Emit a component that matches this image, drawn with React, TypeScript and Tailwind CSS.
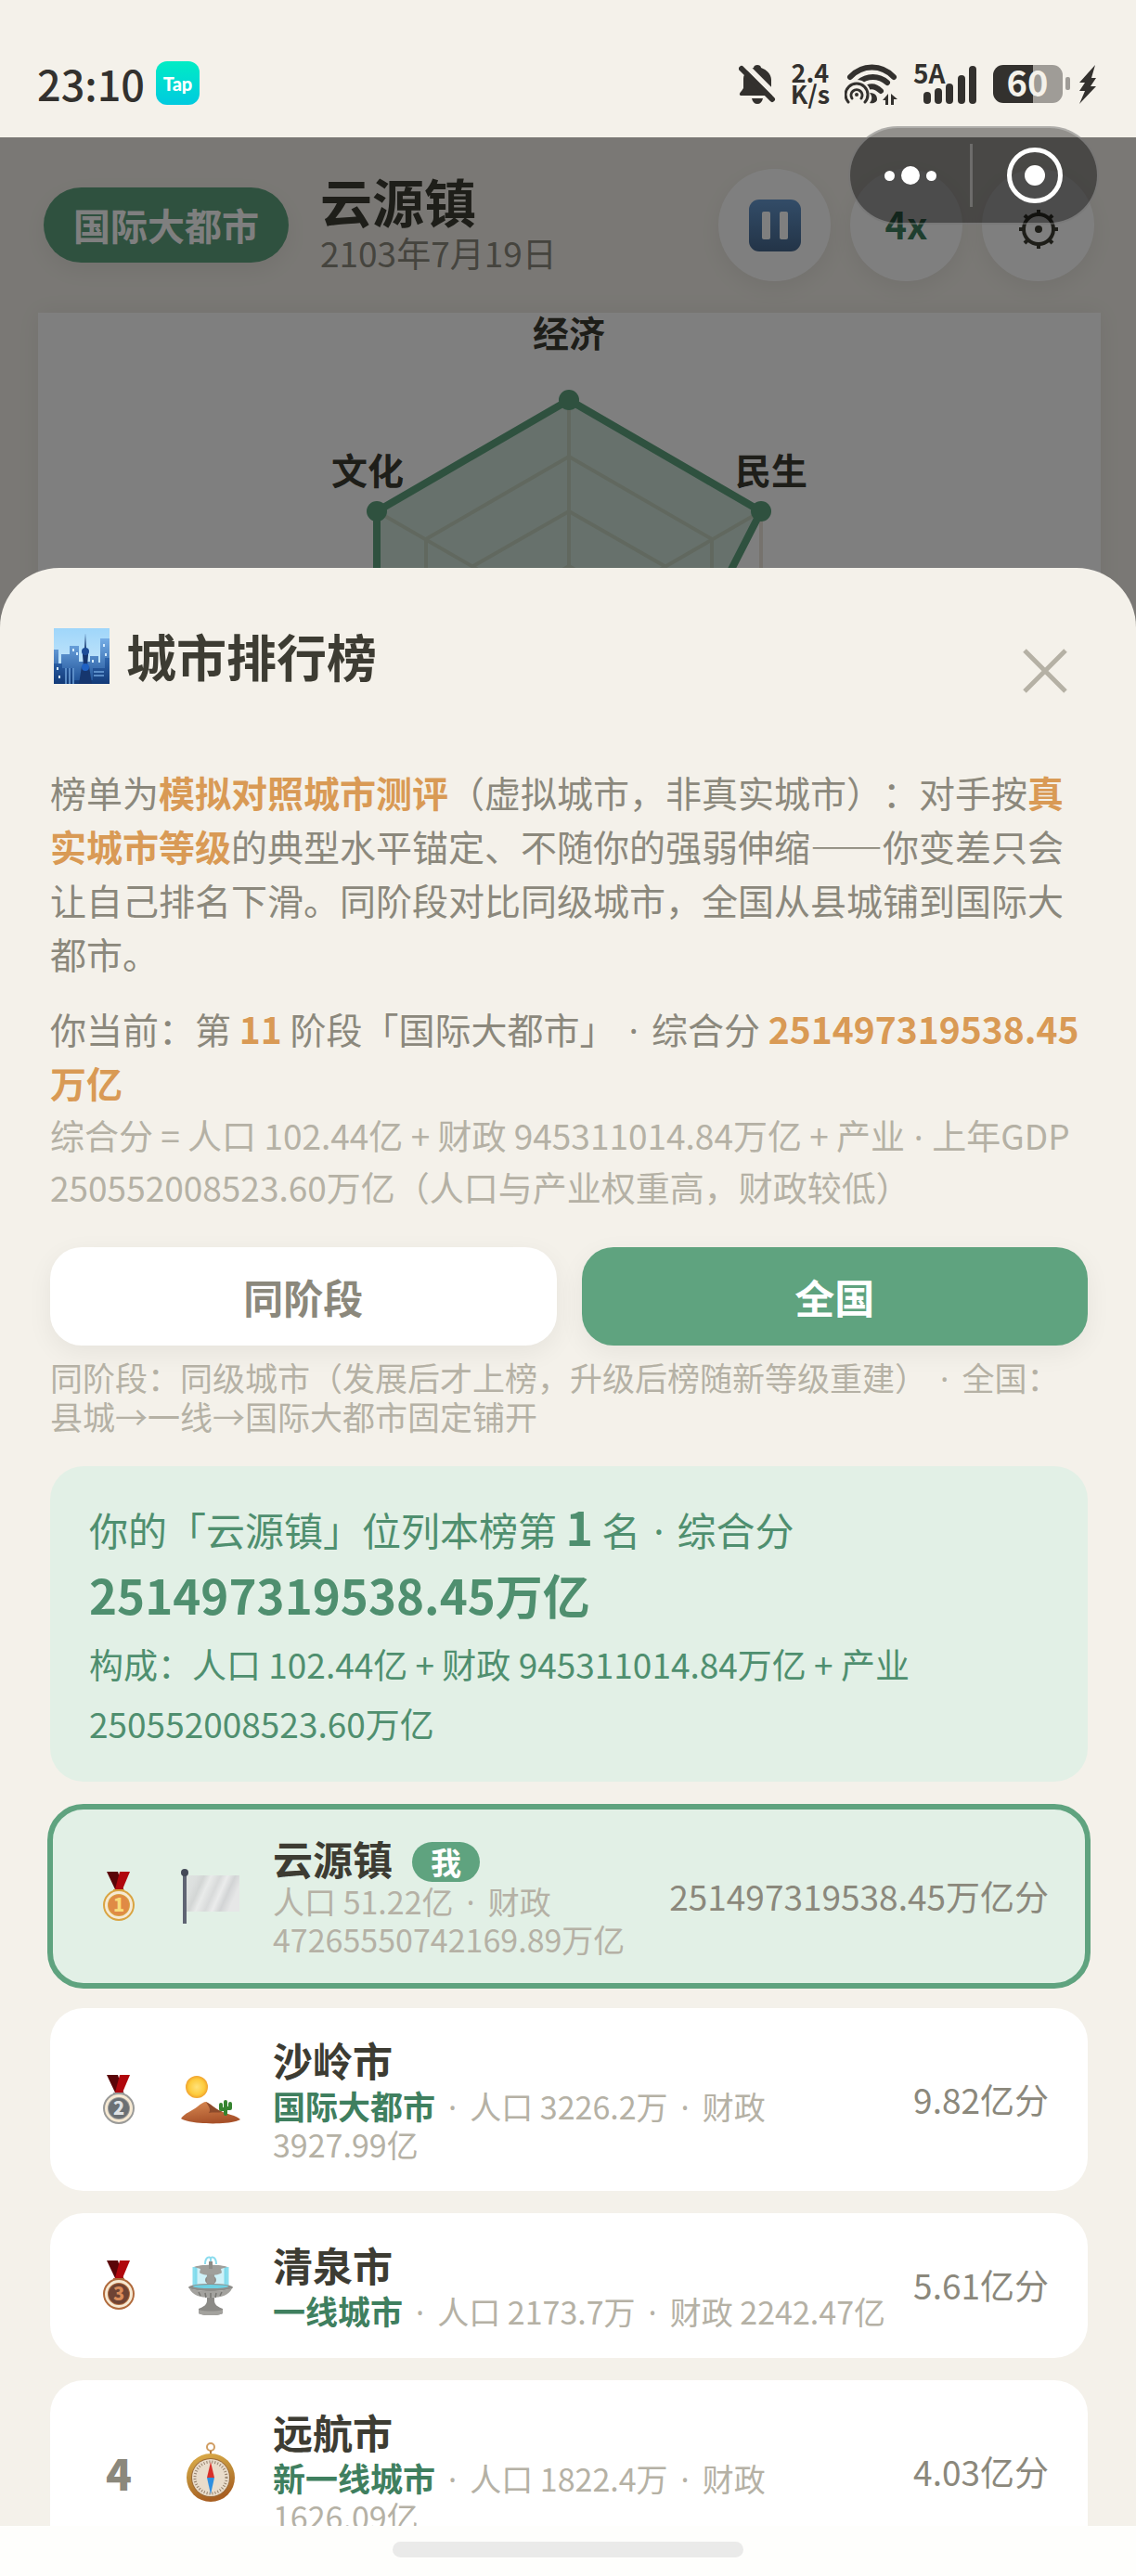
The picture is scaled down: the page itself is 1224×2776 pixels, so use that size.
import { useState } from 'react';

type City = {
  name: string;
  rank: number;
  level?: string;
  population: string;
  finance: string;
  score: string;
  icon: () => React.ReactNode;
  me?: boolean;
};

const cities: City[] = [
  { name: '云源镇', rank: 1, population: '51.22亿', finance: '47265550742169.89万亿', score: '251497319538.45万亿分', icon: FlagIcon, me: true },
  { name: '沙岭市', rank: 2, level: '国际大都市', population: '3226.2万', finance: '3927.99亿', score: '9.82亿分', icon: DesertIcon },
  { name: '清泉市', rank: 3, level: '一线城市', population: '2173.7万', finance: '2242.47亿', score: '5.61亿分', icon: FountainIcon },
  { name: '远航市', rank: 4, level: '新一线城市', population: '1822.4万', finance: '1626.09亿', score: '4.03亿分', icon: CompassIcon },
];

const medals: Record<number, { rim: string; inner: string; digit: string }> = {
  1: { rim: '#d9a441', inner: '#e08a45', digit: '#f9dc7a' },
  2: { rim: '#9a9a98', inner: '#6b7074', digit: '#dfe2e4' },
  3: { rim: '#b06a3c', inner: '#6e4334', digit: '#d98c5a' },
};

// narrow middle dot between facts
function Dot() {
  return <span className="mx-[14px] font-['Noto_Sans'] leading-none">·</span>;
}

function Medal({ rank }: { rank: number }) {
  const m = medals[rank];
  return (
    <svg width="36" height="54" viewBox="0 0 36 54">
      <path d="M5 0h12l6 19h-9z" fill="#5a0508" />
      <path d="M19 0h11l-8 19h-8z" fill="#b0070d" />
      <path d="M12 19h12v4H12z" fill={m.rim} />
      <circle cx="18" cy="36" r="17" fill={m.rim} />
      <circle cx="18" cy="36" r="15" fill="#f6e9d3" />
      <circle cx="18" cy="36" r="12" fill={m.rim} />
      <circle cx="18" cy="36" r="11" fill={m.inner} />
      <text x="18" y="43" textAnchor="middle" fontSize="20" fontWeight="900" fill={m.digit}>{rank}</text>
    </svg>
  );
}

function FlagIcon() {
  return (
    <svg width="64" height="60" viewBox="0 0 64 60">
      <defs>
        <linearGradient id="cloth" x1="0" y1="0" x2="1" y2="0.3">
          <stop offset="0" stopColor="#dfe4e1" />
          <stop offset="0.2" stopColor="#dcdfde" />
          <stop offset="0.32" stopColor="#d3d6d5" />
          <stop offset="0.44" stopColor="#e9ebea" />
          <stop offset="0.6" stopColor="#d8dada" />
          <stop offset="0.72" stopColor="#ebecec" />
          <stop offset="0.85" stopColor="#d2d4d5" />
          <stop offset="1" stopColor="#e6e7e7" />
        </linearGradient>
      </defs>
      <path d="M5 7h58v39H5z" fill="url(#cloth)" />
      <path d="M2 4h4v55H2z" fill="#5f6473" />
      <circle cx="4" cy="4" r="4" fill="#454a58" />
    </svg>
  );
}

function DesertIcon() {
  return (
    <svg width="64" height="54" viewBox="0 0 64 54">
      <defs>
        <radialGradient id="sun">
          <stop offset="0" stopColor="#ffe27a" />
          <stop offset="0.7" stopColor="#fdcb3c" />
          <stop offset="1" stopColor="#f0a22e" />
        </radialGradient>
        <linearGradient id="dune" x1="0" y1="0" x2="0.3" y2="1">
          <stop offset="0" stopColor="#d98a52" />
          <stop offset="1" stopColor="#a8522a" />
        </linearGradient>
      </defs>
      <circle cx="17" cy="13" r="12" fill="url(#sun)" />
      <path d="M0 47C4 41 12 39 18 34c3-3 7-5 9-5 6 3 10 8 18 11 6 3 14 3 19 8-8 6-54 6-64-1z" fill="url(#dune)" />
      <path d="M27 29c2 4 6 8 3 12 4-1 10 0 15-1-8-3-12-8-18-11z" fill="#8d4a2b" />
      <path d="M48 42V29m-5 3v5h5m5-6v5h-5" fill="none" stroke="#35842f" strokeWidth="4" strokeLinecap="round" strokeLinejoin="round" />
    </svg>
  );
}

function FountainIcon() {
  return (
    <svg width="50" height="64" viewBox="0 0 50 64">
      <path d="M8 12h34v22H8z" fill="#a5e6f3" opacity="0.55" />
      <path d="M8 12v22M42 12v22" stroke="#6fd6ea" strokeWidth="5" opacity="0.8" />
      <path d="M19 9c0-8 5-9 6-6v10m0-10c1-3 6-2 6 6" fill="none" stroke="#8cdcee" strokeWidth="2" />
      <path d="M7 12c6-3 30-3 36 0l-7 2 1 4c-4 4-20 4-24 0l1-4z" fill="#a09f9b" />
      <path d="M23 6h4v8h-4z" fill="#8d8c88" />
      <ellipse cx="25" cy="26" rx="6" ry="5" fill="#8f8e8a" />
      <path d="M21 20h8v14h-8z" fill="#9b9a96" />
      <ellipse cx="25" cy="34" rx="24" ry="4" fill="#8e8d89" />
      <ellipse cx="25" cy="33" rx="19" ry="2" fill="#6fd0e2" />
      <path d="M2 35c3 7 11 10 23 10s20-3 23-10c-12 4-34 4-46 0z" fill="#a3a29e" />
      <path d="M12 39l2 4m5-3l1 5m5-5v5m6-5l-1 5m7-6l-2 4" stroke="#777672" strokeWidth="1.5" />
      <path d="M21 45h8v3c0 5 4 7 9 9v5c-6 3-20 3-26 0v-5c5-2 9-4 9-9z" fill="#8b8a86" />
      <path d="M12 58c6 2 20 2 26 0v4c-6 3-20 3-26 0z" fill="#a3a29e" />
    </svg>
  );
}

function CompassIcon() {
  return (
    <svg width="54" height="66" viewBox="0 0 54 66">
      <defs>
        <linearGradient id="brass" x1="0" y1="0" x2="0.3" y2="1">
          <stop offset="0" stopColor="#e0b04c" />
          <stop offset="0.5" stopColor="#c08d38" />
          <stop offset="1" stopColor="#a85f22" />
        </linearGradient>
      </defs>
      <circle cx="27" cy="6" r="4" fill="none" stroke="#cf9c62" strokeWidth="2" />
      <path d="M26 10h2v4h-2z" fill="#b57a3c" />
      <circle cx="27" cy="39" r="26" fill="url(#brass)" />
      <circle cx="27" cy="39" r="21" fill="#9a6a3a" />
      <circle cx="27" cy="39" r="20" fill="#e9dccb" />
      <circle cx="27" cy="39" r="17" fill="none" stroke="#94806c" strokeWidth="3" strokeDasharray="1 2" />
      <path d="M27 22l4 17h-8z" fill="#d8302a" />
      <path d="M27 57l4-18h-8z" fill="#2f8fe0" />
    </svg>
  );
}

function CityIcon() {
  return (
    <svg width="60" height="60" viewBox="0 0 60 60" aria-hidden="true">
      <defs>
        <linearGradient id="sky" x1="0" y1="0" x2="0" y2="1">
          <stop offset="0" stopColor="#9fd6fa" />
          <stop offset="0.6" stopColor="#bfe3fa" />
          <stop offset="1" stopColor="#7db4e0" />
        </linearGradient>
        <linearGradient id="tower" x1="0" y1="0" x2="0" y2="1">
          <stop offset="0" stopColor="#75ade6" />
          <stop offset="1" stopColor="#1c4f95" />
        </linearGradient>
        <linearGradient id="front" x1="0" y1="0" x2="0" y2="1">
          <stop offset="0" stopColor="#2f66ad" />
          <stop offset="1" stopColor="#123a78" />
        </linearGradient>
      </defs>
      <path d="M0 0h60v60H0z" fill="url(#sky)" />
      <path d="M0 23h5v15h3V28h9V19h10v17h12v-6h9v7h2V11h10v49H0z" fill="url(#tower)" />
      <path d="M0 38h9v5h13v13h20V43h13V32h5v28H0z" fill="url(#front)" />
      <path d="M13 43v17m4-17v17m4-17v17M43 47h11m-11 4h11" stroke="#6fa3da" strokeWidth="1.5" />
      <path d="M20 22h2v3h-2zm4 4h2v3h-2zm29-9h2v3h-2zm2 10h2v3h-2zM3 42h2v3H3zm2 9h2v3H5zm36-17h2v3h-2z" fill="#d3ebff" />
      <path d="M34 5l1 18h2v6l-1 12h2l3 19H27l3-19h2l-1-12v-6h2z" fill="#16366e" />
      <circle cx="34" cy="25" r="4" fill="#1d4c97" />
      <circle cx="34" cy="42" r="4" fill="#1f62c4" />
    </svg>
  );
}

function Radar() {
  return (
    <svg width="560" height="478" viewBox="334 337 560 478" className="mx-auto block overflow-visible">
      <g fill="none" stroke="#ece5da" strokeWidth="4">
        <path d="M613 431L820 551V790L613 909L406 790V551Z" />
        <path d="M613 492L767 581V759L613 848L459 759V581Z" />
        <path d="M613 551L716 610V730L613 789L510 730V610Z" />
        <path d="M613 610L665 640V700L613 730L561 700V640Z" />
        <path d="M613 431V909M406 551L820 790M820 551L406 790" />
      </g>
      <path d="M613 431L820 551L726 735L613 850L406 790V551Z" fill="#5fa37f" fillOpacity="0.3" stroke="#5fa37f" strokeWidth="8" />
      <g fill="#5fa37f">
        <circle cx="613" cy="431" r="11" />
        <circle cx="820" cy="551" r="11" />
        <circle cx="406" cy="551" r="11" />
      </g>
      <g fill="#3d3c33" fontSize="39" fontWeight="700" textAnchor="middle">
        <text x="613" y="374">经济</text>
        <text x="396" y="522">文化</text>
        <text x="831" y="522">民生</text>
      </g>
    </svg>
  );
}

function StatusBar() {
  return (
    <header className="flex h-[148px] shrink-0 items-center justify-between pt-[34px] pr-[42px] pl-[40px] text-[#33312e]">
      <div className="flex items-center gap-3 pb-[3px]">
        <span className="text-[45px] leading-[45px] font-medium">23:10</span>
        <span className="flex h-[47px] w-[47px] items-center justify-center rounded-xl bg-linear-to-b from-[#04ecc4] to-[#02cadf] font-['Lato'] text-[20px] font-black text-white">Tap</span>
      </div>
      <div className="flex items-center gap-4">
        <svg width="40" height="44" viewBox="0 0 40 44">
          <path d="M20 1c2 0 4 1 4 3 6 2 11 7 11 13v14l3 3H2c-2-1-1-3 1-5l2-3V16c0-6 5-10 11-12 0-2 2-3 4-3z" fill="currentColor" />
          <path d="M14 37h12c-1 4-3 6-6 6s-5-2-6-6z" fill="currentColor" />
          <path d="M6 0L42 36" stroke="#f4f1ea" strokeWidth="6" />
          <path d="M3 5L36 38" stroke="currentColor" strokeWidth="6" strokeLinecap="round" />
        </svg>
        <span className="pb-1 text-center text-[27px] leading-[23px] font-bold">2.4<br />K/s</span>
        <svg width="58" height="46" viewBox="0 0 58 46" fill="none" stroke="currentColor" strokeLinecap="round">
          <path d="M6 15c13-14 34-14 47 0" strokeWidth="6" />
          <path d="M15 21c9-8 22-8 31 0" strokeWidth="6" />
          <path d="M25 26c5-2 10 0 14 4" strokeWidth="6" />
          <circle cx="13" cy="33" r="15" fill="#f4f1ea" stroke="none" />
          <path d="M4 42a12 12 0 1 1 18 0" strokeWidth="3" />
          <path d="M8 38a6 6 0 1 1 10 0" strokeWidth="3" />
          <circle cx="13" cy="34" r="2" fill="currentColor" stroke="none" />
          <path d="M27 32c7 0 8 4 8 7s-4 5-8 4c3-4 3-7 0-11zM47 33v12h-3v-5h-3zM50 33l7 6h-4v6h-3z" fill="currentColor" stroke="none" />
        </svg>
        <svg width="70" height="44" viewBox="0 0 70 44" fill="currentColor" className="overflow-visible">
          <text x="0" y="21" fontSize="28" fontWeight="700">5A</text>
          <rect x="11" y="30" width="8" height="13" rx="4" />
          <rect x="23" y="26" width="8" height="17" rx="4" />
          <rect x="35" y="21" width="8" height="22" rx="4" />
          <rect x="48" y="12" width="8" height="31" rx="4" />
          <rect x="60" y="2" width="8" height="41" rx="4" />
        </svg>
        <svg width="84" height="42" viewBox="0 0 84 42" className="overflow-visible">
          <path d="M11 0h32v41H11a11 11 0 0 1-11-11V11a11 11 0 0 1 11-11z" fill="currentColor" />
          <path d="M43 0h21a11 11 0 0 1 11 11v19a11 11 0 0 1-11 11H43z" fill="#9f9c97" />
          <rect x="78" y="13" width="5" height="14" rx="2" fill="#9f9c97" />
          <text x="37" y="34" textAnchor="middle" fontSize="38" fontWeight="700" fill="#f4f1ea">60</text>
        </svg>
        <svg width="20" height="42" viewBox="0 0 20 42" className="-ml-2">
          <path d="M18 0L1 19h6l-6 9h6L1 42l18-19h-6l6-9h-5z" fill="currentColor" />
        </svg>
      </div>
    </header>
  );
}

function GameHeader() {
  return (
    <div className="flex h-[189px] items-center justify-between pr-[45px] pl-[47px]">
      <div className="flex items-center">
        <span className="rounded-full bg-[#5fa37f] px-8 text-[40px] leading-[81px] font-bold text-white shadow-[0_8px_24px_rgba(0,0,0,0.06)]">国际大都市</span>
        <div className="ml-[34px] pb-[6px]">
          <h1 className="text-[56px] leading-[64px] font-bold text-[#3d3c33]">云源镇</h1>
          <p className="text-[37px] leading-[48px] text-[#8b887c]">2103年7月19日</p>
        </div>
      </div>
      <div className="flex gap-[21px]">
        <button aria-label="暂停" className="flex h-[121px] w-[121px] items-center justify-center rounded-full bg-white shadow-[0_8px_24px_rgba(0,0,0,0.06)]">
          <svg width="56" height="56" viewBox="0 0 56 56">
            <defs>
              <linearGradient id="pause" x1="0" y1="0" x2="0" y2="1">
                <stop offset="0" stopColor="#6699d0" />
                <stop offset="1" stopColor="#46688f" />
              </linearGradient>
            </defs>
            <rect width="56" height="56" rx="11" fill="url(#pause)" />
            <rect x="14" y="13" width="9" height="30" rx="2" fill="#fff" />
            <rect x="33" y="13" width="9" height="30" rx="2" fill="#fff" />
          </svg>
        </button>
        <button className="h-[121px] w-[121px] rounded-full bg-white pb-1 text-[40px] font-bold text-[#3f7f5f] shadow-[0_8px_24px_rgba(0,0,0,0.06)]">4x</button>
        <button aria-label="设置" className="flex h-[121px] w-[121px] items-center justify-center rounded-full bg-white pt-2 shadow-[0_8px_24px_rgba(0,0,0,0.06)]">
          <svg width="44" height="44" viewBox="0 0 44 44" fill="none" stroke="#3d3c33" strokeWidth="4">
            <circle cx="22" cy="22" r="16" />
            <circle cx="22" cy="22" r="4" fill="#3d3c33" stroke="none" />
            <path d="M22 1v6M22 37v6M1 22h6M37 22h6M7 7l4 4M33 33l4 4M37 7l-4 4M11 33l-4 4" />
          </svg>
        </button>
      </div>
    </div>
  );
}

function Capsule() {
  return (
    <div className="absolute top-[136px] right-[40px] flex h-[106px] w-[270px] items-center rounded-full border-2 border-white/25 bg-black/40">
      <button aria-label="更多" className="flex flex-1 items-center justify-center gap-[7px]">
        <span className="h-[11px] w-[11px] rounded-full bg-white" />
        <span className="h-5 w-5 rounded-full bg-white" />
        <span className="h-[11px] w-[11px] rounded-full bg-white" />
      </button>
      <span className="h-[68px] w-[3px] bg-white/20" />
      <button aria-label="关闭小游戏" className="flex w-[134px] items-center justify-center">
        <span className="flex h-[60px] w-[60px] items-center justify-center rounded-full border-5 border-white">
          <span className="h-[22px] w-[22px] rounded-full bg-white" />
        </span>
      </button>
    </div>
  );
}

function CityRow({ city }: { city: City }) {
  const Icon = city.icon;
  return (
    <li className={city.me
      ? 'flex items-center rounded-[36px] bg-[#e2f0e6] px-[42px] py-[30px] outline-6 -outline-offset-3 outline-[#5fa37f]'
      : 'flex items-center rounded-[36px] bg-white px-[42px] py-[30px]'}
    >
      <div className="flex w-[64px] shrink-0 justify-center">
        {city.rank <= 3 ? <Medal rank={city.rank} /> : <span className="text-[46px] leading-none font-black text-[#8b887c]">{city.rank}</span>}
      </div>
      <div className="mx-[35px] flex w-[64px] shrink-0 justify-center"><Icon /></div>
      <div className="min-w-0 flex-1">
        <div className="flex items-center text-[43px] leading-[51px] font-bold text-[#3d3c33]">
          {city.name}
          {city.me && <span className="mt-2 ml-[21px] rounded-full bg-[#5fa37f] px-5 text-[33px] leading-[43px] font-bold text-white">我</span>}
        </div>
        <p className={city.me ? 'text-[34px] leading-[41px] text-[#b5b1a5]' : 'mt-1 text-[34px] leading-[41px] text-[#b5b1a5]'}>
          {city.level && <><b className="text-[35px] leading-none font-bold text-[#3f7f5f]">{city.level}</b><Dot /></>}
          人口 {city.population}<Dot />财政 <span className="whitespace-nowrap">{city.finance}</span>
        </p>
      </div>
      <div className="ml-4 shrink-0 text-[37px] text-[#8b887c]">{city.score}</div>
    </li>
  );
}

export default function App() {
  const [tab, setTab] = useState('all');
  const on = 'h-[106px] flex-1 rounded-[34px] bg-[#5fa37f] text-[43px] font-bold text-white shadow-[0_8px_28px_rgba(0,0,0,0.06)]';
  const off = 'h-[106px] flex-1 rounded-[34px] bg-white text-[43px] font-bold text-[#8b887c] shadow-[0_8px_28px_rgba(0,0,0,0.06)]';

  return (
    <div className="relative flex h-screen flex-col overflow-hidden bg-[#f4f1ea] font-['Noto_Sans_CJK_SC','Noto_Sans',sans-serif] [text-spacing-trim:space-all]" lang="zh-CN">
      <StatusBar />
      <div className="relative h-[528px] shrink-0 overflow-hidden">
        <GameHeader />
        <div className="mr-[38px] ml-[41px] bg-white shadow-[0_0_24px_rgba(0,0,0,0.06)]">
          <Radar />
        </div>
        <div className="absolute inset-0 bg-black/50" />
      </div>
      <Capsule />

      <main className="relative -mt-16 min-h-0 flex-1 overflow-hidden rounded-t-[64px] bg-[#f4f1ea] pr-[52px] pl-[54px]">
        <div className="flex items-center justify-between pt-[55px]">
          <h2 className="flex items-center gap-[18px] pl-1 text-[54px] leading-[80px] font-bold text-[#3d3c33]">
            <CityIcon />
            城市排行榜
          </h2>
          <button aria-label="关闭" className="mt-8 mr-[22px]">
            <svg width="48" height="48" viewBox="0 0 48 48" stroke="#b5b1a5" strokeWidth="5">
              <path d="M2 2l44 44M46 2L2 46" />
            </svg>
          </button>
        </div>

        <div className="mt-[77px] text-[39px] leading-[58px] text-[#8b887c]">
          <p>
            榜单为<b className="text-[#d99a55]">模拟对照城市测评</b>（虚拟城市，非真实城市）：对手按<b className="text-[#d99a55]">真实城市等级</b>的典型水平锚定、不随你的强弱伸缩——你变差只会让自己排名下滑。同阶段对比同级城市，全国从县城铺到国际大都市。
          </p>
          <p className="mt-[23px]">
            你当前：第 <b className="text-[#d99a55]">11</b> 阶段「国际大都市」<Dot />综合分 <b className="text-[#d99a55]">251497319538.45万亿</b>
          </p>
          <p className="text-[37px] leading-[56px] text-[#b5b1a5]">
            综合分 = 人口 102.44亿 + 财政 945311014.84万亿 + 产业<span className="font-['Noto_Sans'] leading-none"> · </span>上年GDP 250552008523.60万亿（人口与产业权重高，财政较低）
          </p>
        </div>

        <div className="mt-[37px] flex gap-[27px]">
          <button className={tab === 'same' ? on : off} onClick={() => setTab('same')}>同阶段</button>
          <button className={tab === 'all' ? on : off} onClick={() => setTab('all')}>全国</button>
        </div>
        <p className="mt-[13px] text-[35px] leading-[42px] text-[#b5b1a5]">
          同阶段：同级城市（发展后才上榜，升级后榜随新等级重建）<Dot />全国：<br />县城→一线→国际大都市固定铺开
        </p>

        <div className="mt-[33px] rounded-[36px] bg-[#e2f0e6] px-[42px] py-[31px] text-[42px] leading-[74px] text-[#4f8f6f]">
          <p>
            你的「云源镇」位列本榜第 <b className="text-[50px] leading-none">1</b> 名<Dot />综合分
            <br />
            <b className="text-[51px] leading-none">251497319538.45万亿</b>
          </p>
          <p className="mt-[2px] text-[37px] leading-[64px]">
            构成：人口 102.44亿 + 财政 945311014.84万亿 + 产业<br />250552008523.60万亿
          </p>
        </div>

        <ul className="mt-[27px] flex flex-col gap-6">
          {cities.map(city => <CityRow key={city.rank} city={city} />)}
        </ul>
      </main>

      <footer className="flex h-[54px] shrink-0 justify-center bg-[#fefefc] pt-[17px]">
        <span className="h-[17px] w-[378px] rounded-full bg-[#eaeae9]" />
      </footer>
    </div>
  );
}
